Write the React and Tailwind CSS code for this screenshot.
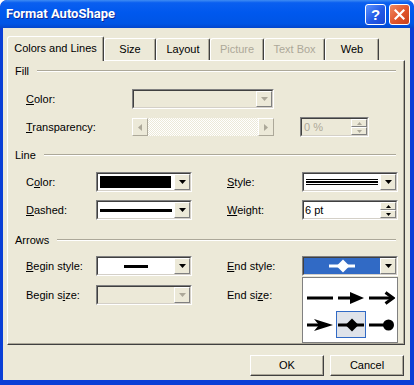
import React from 'react'

const FACE = 'bg-[#ece9d8]'

function U({ children }) {
  return <span className="underline underline-offset-[1px]">{children}</span>
}

function Tri({ up, disabled, w = 7, h = 4 }) {
  const c = disabled ? '#aca899' : '#000'
  return (
    <svg width={w} height={h} viewBox={`0 0 ${w} ${h}`}>
      {up ? <path d={`M0 ${h}H${w}L${w / 2} 0z`} fill={c} /> : <path d={`M0 0H${w}L${w / 2} ${h}z`} fill={c} />}
    </svg>
  )
}

function DropBtn({ disabled }) {
  return (
    <div className={`w-[16px] h-full ${FACE} border border-t-white border-l-white border-r-[#808080] border-b-[#808080] flex items-center justify-center`}>
      <Tri disabled={disabled} />
    </div>
  )
}

function Sunken({ w, children }) {
  return (
    <div className={`${w} h-full border border-t-[#808080] border-l-[#808080] border-r-white border-b-white`}>
      <div className="h-full flex border border-t-[#404040] border-l-[#404040] border-r-[#d4d0c8] border-b-[#d4d0c8]">
        {children}
      </div>
    </div>
  )
}

function Combo({ w, disabled, children, inner = '' }) {
  return (
    <Sunken w={w}>
      <div className={`flex-1 min-w-0 flex items-center ${disabled ? FACE : 'bg-white'} ${inner}`}>{children}</div>
      <DropBtn disabled={disabled} />
    </Sunken>
  )
}

function SpinBtns({ disabled }) {
  const b = `flex-1 ${FACE} border border-t-white border-l-white border-r-[#808080] border-b-[#808080] flex items-center justify-center`
  return (
    <div className="w-[16px] h-full flex flex-col">
      <div className={b}><Tri up disabled={disabled} w={5} h={3} /></div>
      <div className={b}><Tri disabled={disabled} w={5} h={3} /></div>
    </div>
  )
}

function Group({ title }) {
  return (
    <div className="flex items-center h-[14px] pl-[7px] pr-[8px]">
      <span>{title}</span>
      <div className="flex-1 ml-[8px] border-t border-t-[#aca899] border-b border-b-white" />
    </div>
  )
}

function Row({ children, className = '' }) {
  return <div className={`flex items-center h-[20px] pl-[18px] ${className}`}>{children}</div>
}

function Icon({ kind, color = '#000' }) {
  return (
    <svg width="26" height="14" viewBox="0 0 26 14">
      {kind === 'line' && <rect x="0" y="5.5" width="26" height="3" fill={color} />}
      {kind === 'arrow' && (
        <>
          <rect x="0" y="5.5" width="14" height="3" fill={color} />
          <polygon points="12,1 26,7 12,13" fill={color} />
        </>
      )}
      {kind === 'open' && (
        <>
          <rect x="0" y="5.5" width="23" height="3" fill={color} />
          <polyline points="16.5,1.5 24,7 16.5,12.5" fill="none" stroke={color} strokeWidth="3" />
        </>
      )}
      {kind === 'stealth' && (
        <>
          <rect x="0" y="5.5" width="14" height="3" fill={color} />
          <polygon points="7,1 26,7 7,13 12,7" fill={color} />
        </>
      )}
      {kind === 'diamond' && (
        <>
          <rect x="0" y="5.5" width="26" height="3" fill={color} />
          <polygon points="14,0.5 20.5,7 14,13.5 7.5,7" fill={color} />
        </>
      )}
      {kind === 'oval' && (
        <>
          <rect x="0" y="5.5" width="18" height="3" fill={color} />
          <circle cx="19.5" cy="7" r="5.5" fill={color} />
        </>
      )}
    </svg>
  )
}

function Tab({ label, active, disabled, w }) {
  return (
    <div
      className={`${w} ${FACE} flex items-center justify-center border-t border-l border-t-white border-l-white border-r border-r-[#404040] shadow-[inset_-1px_0_#aca899] rounded-tl-[3px] rounded-tr-[2px] ${
        active ? 'h-[25px] -mb-px relative z-10 pb-[2px]' : 'h-[22px]'
      } ${disabled ? 'text-[#aca899]' : ''}`}
    >
      {label}
    </div>
  )
}

function Button({ children }) {
  return (
    <div className={`w-[74px] h-[21px] ${FACE} border border-t-white border-l-white border-r-[#404040] border-b-[#404040] shadow-[inset_-1px_-1px_#aca899] flex items-center justify-center`}>
      {children}
    </div>
  )
}

export default function App() {
  return (
    <div className="w-[414px] h-[385px] bg-[#0a3fd6] rounded-t-[7px] flex flex-col font-['Liberation_Sans',Arial,sans-serif] text-[11px] text-black overflow-hidden">
      {/* Title bar */}
      <div className="h-[28px] shrink-0 flex items-center justify-between pl-[6px] pr-[4px] rounded-t-[7px] bg-[linear-gradient(to_bottom,#3f8cf3_0%,#0a5ff0_10%,#0058ee_45%,#0055e5_85%,#0446cc_100%)]">
        <span className="text-white font-['Roboto',sans-serif] font-bold text-[13px] [text-shadow:1px_1px_#0b2a9a]">Format AutoShape</span>
        <div className="flex gap-[3px] pt-[1px]">
          <div className="w-[21px] h-[21px] rounded-[3px] border border-white bg-[linear-gradient(135deg,#5d93ff,#2159e6_55%,#1a48d4)] flex items-center justify-center text-white font-bold text-[15px] leading-none">
            ?
          </div>
          <div className="w-[21px] h-[21px] rounded-[3px] border border-white bg-[linear-gradient(135deg,#f08a62,#e0542b_55%,#c8401c)] flex items-center justify-center">
            <svg width="11" height="11" viewBox="0 0 11 11">
              <path d="M1.5 1.5L9.5 9.5M9.5 1.5L1.5 9.5" stroke="#fff" strokeWidth="2.2" strokeLinecap="square" />
            </svg>
          </div>
        </div>
      </div>

      {/* Body */}
      <div className={`mx-[3px] mr-[4px] h-[352px] ${FACE} flex flex-col pt-[8px] pl-[4px] pr-[5px]`}>
        {/* Tabs */}
        <div className="h-[24px] flex items-end">
          <Tab label="Colors and Lines" active w="w-[97px]" />
          <Tab label="Size" w="w-[52px]" />
          <Tab label="Layout" w="w-[54px]" />
          <Tab label="Picture" disabled w="w-[54px]" />
          <Tab label="Text Box" disabled w="w-[61px]" />
          <Tab label="Web" w="w-[54px]" />
        </div>

        {/* Panel */}
        <div className="h-[285px] border border-t-white border-l-white border-r-[#404040] border-b-[#404040] shadow-[inset_-1px_-1px_#aca899] pt-[3px]">
          <Group title="Fill" />
          <Row className="mt-[11px]">
            <span className="w-[106px]"><U>C</U>olor:</span>
            <Combo w="w-[142px]" disabled />
          </Row>
          <Row className="mt-[8px] h-[19px]">
            <span className="w-[106px]"><U>T</U>ransparency:</span>
            <div className="w-[142px] h-[18px] flex">
              <div className={`w-[16px] h-full ${FACE} border border-t-white border-l-white border-r-[#aca899] border-b-[#aca899] flex items-center justify-center`}>
                <svg width="4" height="7"><path d="M4 0V7L0 3.5z" fill="#aca899" /></svg>
              </div>
              <div className="flex-1 bg-[repeating-conic-gradient(#ffffff_0%_25%,#ece9d8_0%_50%)] bg-size-[2px_2px]" />
              <div className={`w-[16px] h-full ${FACE} border border-t-white border-l-white border-r-[#aca899] border-b-[#aca899] flex items-center justify-center`}>
                <svg width="4" height="7"><path d="M0 0V7L4 3.5z" fill="#aca899" /></svg>
              </div>
            </div>
            <div className="w-[26px]" />
            <Sunken w="w-[69px]">
              <div className={`flex-1 ${FACE} flex items-center pl-[2px] text-[#aca899]`}>0 %</div>
              <SpinBtns disabled />
            </Sunken>
          </Row>

          <div className="mt-[11px]">
            <Group title="Line" />
          </div>
          <Row className="mt-[10px]">
            <span className="w-[70px]">C<U>o</U>lor:</span>
            <Combo w="w-[96px]" inner="p-[2px] pr-[3px]">
              <div className="w-full h-full bg-black" />
            </Combo>
            <div className="w-[35px]" />
            <span className="w-[75px]"><U>S</U>tyle:</span>
            <Combo w="w-[96px]" inner="px-[2px]">
              <div className="w-full flex flex-col gap-[1px]">
                <div className="h-[1px] bg-black" />
                <div className="h-[2px] bg-black" />
                <div className="h-[1px] bg-black" />
              </div>
            </Combo>
          </Row>
          <Row className="mt-[8px]">
            <span className="w-[70px]"><U>D</U>ashed:</span>
            <Combo w="w-[96px]" inner="px-[2px]">
              <div className="w-full h-[3px] bg-black" />
            </Combo>
            <div className="w-[35px]" />
            <span className="w-[75px]"><U>W</U>eight:</span>
            <Sunken w="w-[96px]">
              <div className="flex-1 bg-white flex items-center pl-[1px]">6 pt</div>
              <SpinBtns />
            </Sunken>
          </Row>

          <div className="mt-[13px]">
            <Group title="Arrows" />
          </div>
          <Row className="mt-[9px]">
            <span className="w-[70px]"><U>B</U>egin style:</span>
            <Combo w="w-[96px]" inner="justify-center">
              <div className="w-[24px] h-[3px] bg-black" />
            </Combo>
            <div className="w-[35px]" />
            <span className="w-[75px]"><U>E</U>nd style:</span>
            <div className="relative h-full z-20">
              <Combo w="w-[96px]" inner="justify-center bg-[#316ac5]!">
                <Icon kind="diamond" color="#fff" />
              </Combo>
              <div className="absolute left-0 top-[21px] w-[96px] h-[66px] bg-white border border-[#808080] pt-[6px] pl-[2px]">
                <div className="grid grid-cols-[30px_30px_30px] gap-x-[1px]">
                  {['line', 'arrow', 'open', 'stealth', 'diamond', 'oval'].map((k) => (
                    <div
                      key={k}
                      className={`h-[27px] flex items-center justify-center ${
                        k === 'diamond' ? 'bg-[#dfe3ea] border border-[#316ac5]' : ''
                      }`}
                    >
                      <Icon kind={k} />
                    </div>
                  ))}
                </div>
              </div>
            </div>
          </Row>
          <Row className="mt-[9px]">
            <span className="w-[70px]">Begin s<U>i</U>ze:</span>
            <Combo w="w-[96px]" disabled />
            <div className="w-[35px]" />
            <span className="w-[75px]">End si<U>z</U>e:</span>
          </Row>
        </div>

        {/* Buttons */}
        <div className="mt-[10px] flex justify-end gap-[6px] pr-[1px]">
          <Button>OK</Button>
          <Button>Cancel</Button>
        </div>
      </div>
    </div>
  )
}
